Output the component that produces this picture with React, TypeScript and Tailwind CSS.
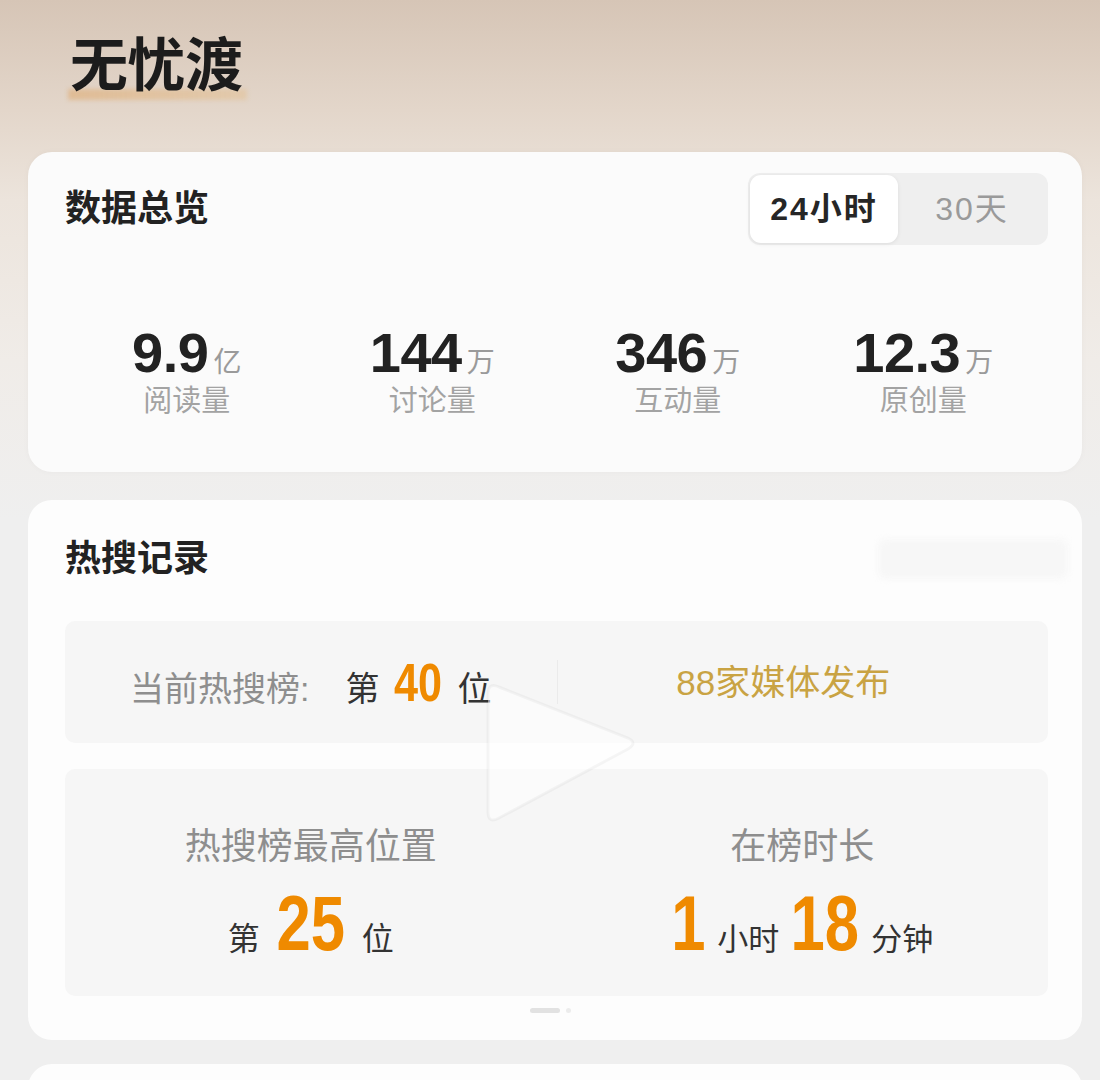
import React, { useState } from "react";

const font = "font-['Liberation_Sans','Noto_Sans_CJK_SC',sans-serif]";

const stats = [
  { value: "9.9", unit: "亿", label: "阅读量" },
  { value: "144", unit: "万", label: "讨论量" },
  { value: "346", unit: "万", label: "互动量" },
  { value: "12.3", unit: "万", label: "原创量" },
];

// 窄体橙色数字：外层给出可见宽度，内层横向压缩
const BigNum: React.FC<{ value: string; box: string; size: string }> = ({ value, box, size }) => (
  <span className={`inline-flex justify-center ${box}`}>
    <span className={`inline-block scale-x-[0.8] font-bold text-[#ef8a00] ${size}`}>{value}</span>
  </span>
);

const App: React.FC = () => {
  const [range, setRange] = useState<"24h" | "30d">("24h");

  return (
    <div
      className={`${font} relative h-[1080px] w-[1100px] overflow-hidden bg-[linear-gradient(180deg,#d6c5b6_0px,#e3d6ca_110px,#ece4dc_200px,#f0ece8_360px,#efefef_520px,#efefef_100%)]`}
    >
      {/* 标题 */}
      <div className="pl-[70px] pt-[37px] h-[152px]">
        <div className="relative inline-block">
          <span className="absolute left-[-2px] right-[-4px] bottom-[-5px] h-[11px] bg-[linear-gradient(90deg,rgba(222,160,90,0.45),rgba(230,180,110,0.3))] blur-[2px]" />
          <h1 className="relative text-[58px] font-bold leading-none tracking-[-0.5px] text-[#1c1c1c]">
            无忧渡
          </h1>
        </div>
      </div>

      {/* 数据总览 */}
      <div className="ml-[28px] mr-[18px] h-[320px] rounded-[24px] bg-[#fbfbfb] shadow-[0_0_6px_rgba(0,0,0,0.03)]">
        <div className="flex items-center justify-between pl-[37px] pr-[34px] pt-[21px]">
          <h2 className="text-[36px] font-bold leading-none text-[#222]">数据总览</h2>
          <div className="flex h-[72px] w-[300px] rounded-[12px] bg-[#efefef] p-[2px]">
            <button
              onClick={() => setRange("24h")}
              className={`flex-1 rounded-[11px] text-[32px] leading-none tracking-[2px] ${
                range === "24h"
                  ? "bg-white font-bold text-[#262626] shadow-[0_1px_4px_rgba(0,0,0,0.08)]"
                  : "text-[#9a9a9a]"
              }`}
            >
              24小时
            </button>
            <button
              onClick={() => setRange("30d")}
              className={`flex-1 rounded-[11px] text-[32px] leading-none tracking-[2px] ${
                range === "30d"
                  ? "bg-white font-bold text-[#262626] shadow-[0_1px_4px_rgba(0,0,0,0.08)]"
                  : "text-[#9a9a9a]"
              }`}
            >
              30天
            </button>
          </div>
        </div>

        <div className="mt-[80px] grid grid-cols-4 px-[36px]">
          {stats.map((s) => (
            <div key={s.label} className="flex flex-col items-center">
              <div className="flex items-baseline">
                <span className="text-[56px] font-bold leading-none tracking-[-0.5px] text-[#222]">
                  {s.value}
                </span>
                <span className="ml-[5px] text-[28px] leading-none text-[#9a9a9a]">{s.unit}</span>
              </div>
              <span className="mt-[6px] text-[29px] leading-none text-[#a3a3a3]">{s.label}</span>
            </div>
          ))}
        </div>
      </div>

      {/* 热搜记录 */}
      <div className="relative ml-[28px] mr-[18px] mt-[28px] h-[540px] rounded-[24px] bg-[#fdfdfd] pl-[37px] pr-[34px] pt-[39px]">
        <div className="flex items-center justify-between">
          <h2 className="text-[36px] font-bold leading-none text-[#222]">热搜记录</h2>
          <div className="mr-[-20px] h-[40px] w-[190px] rounded-[8px] bg-[#f7f7f7] blur-[3px]" />
        </div>

        <div className="mt-[42px] grid h-[122px] grid-cols-2 items-center rounded-[10px] bg-[#f6f6f6]">
          <div className="flex items-baseline justify-center text-[34px] leading-none">
            <span className="text-[#8e8e8e]">当前热搜榜:</span>
            <span className="ml-[36px] text-[#333]">第</span>
            <BigNum value="40" box="mx-[16px] w-[46px]" size="text-[54px] leading-none" />
            <span className="text-[#333]">位</span>
          </div>
          <div className="relative flex items-center justify-center pr-[38px]">
            <span className="absolute left-0 top-1/2 h-[44px] w-px -translate-y-1/2 bg-[#ebebeb]" />
            <span className="text-[35px] leading-none text-[#c9a343]">88家媒体发布</span>
          </div>
        </div>

        <div className="mt-[26px] grid h-[227px] grid-cols-2 rounded-[10px] bg-[#f6f6f6]">
          <div className="flex flex-col items-center pt-[60px]">
            <span className="text-[36px] leading-none text-[#8e8e8e]">热搜榜最高位置</span>
            <div className="mt-[20px] flex items-baseline leading-none">
              <span className="text-[32px] text-[#333]">第</span>
              <BigNum value="25" box="mx-[17px] w-[68px]" size="text-[77px] leading-none" />
              <span className="text-[32px] text-[#333]">位</span>
            </div>
          </div>
          <div className="flex flex-col items-center pt-[60px]">
            <span className="text-[36px] leading-none text-[#8e8e8e]">在榜时长</span>
            <div className="mt-[20px] flex items-baseline leading-none">
              <BigNum value="1" box="w-[34px]" size="text-[77px] leading-none" />
              <span className="mx-[12px] text-[31px] text-[#333]">小时</span>
              <BigNum value="18" box="w-[68px]" size="text-[77px] leading-none" />
              <span className="ml-[12px] text-[31px] text-[#333]">分钟</span>
            </div>
          </div>
        </div>

        <div className="mt-[12px] flex items-center justify-center gap-[6px] pr-[12px]">
          <span className="h-[5px] w-[30px] rounded-full bg-[#e2e2e2]" />
          <span className="h-[5px] w-[5px] rounded-full bg-[#ececec]" />
        </div>

        {/* 视频播放三角 */}
        <svg
          className="pointer-events-none absolute left-[450px] top-[176px]"
          width="165"
          height="155"
          viewBox="0 0 165 155"
        >
          <path
            d="M10 18 Q10 6 21 11 L150 62 Q160 67 150 73 L21 142 Q10 148 10 136 Z"
            fill="rgba(255,255,255,0.5)"
            stroke="rgba(0,0,0,0.035)"
            strokeWidth="3"
          />
        </svg>
      </div>

      {/* 下一张卡片 */}
      <div className="ml-[28px] mr-[18px] mt-[24px] h-[60px] rounded-t-[24px] bg-[#fdfdfd]" />
    </div>
  );
};

export default App;
